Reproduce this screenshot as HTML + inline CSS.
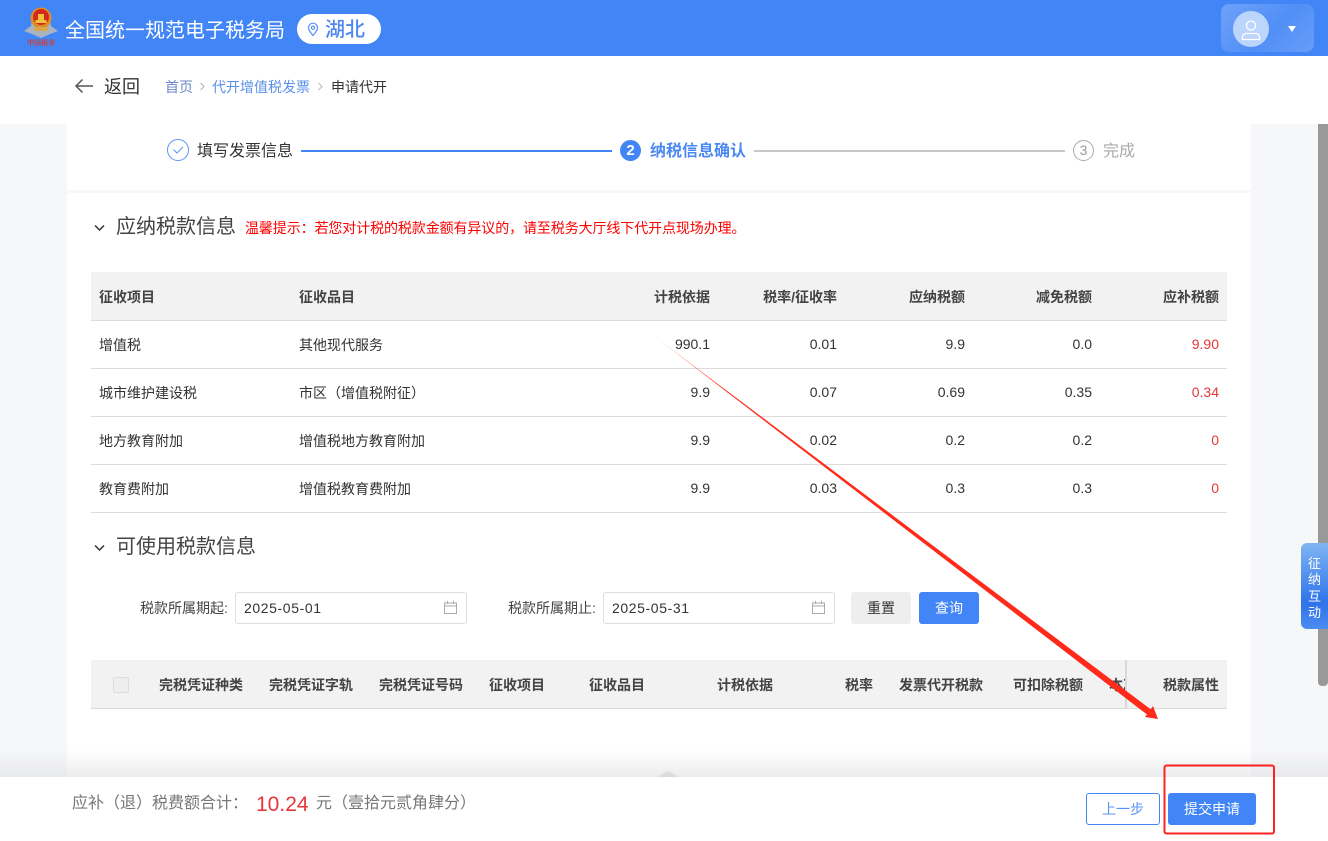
<!DOCTYPE html>
<html lang="zh">
<head>
<meta charset="utf-8">
<title>申请代开</title>
<style>
html,body{margin:0;padding:0;width:1328px;height:841px;overflow:hidden;background:#fff}
body{position:relative;font-family:"Liberation Sans","Noto Sans CJK SC",sans-serif;color:#333;font-size:14px}
.a{position:absolute}
.t{position:absolute;white-space:nowrap;line-height:20px;height:20px}
.r{text-align:right}
.h{font-weight:700;color:#444;font-size:14px}
.c{font-size:14px;color:#333}
.n{font-size:14px;color:#333}
.red{color:#e8353a}
.line{position:absolute;left:91px;width:1136px;height:1px;background:#dcdcdc}
.input{position:absolute;top:592px;width:230px;height:30px;border:1px solid #dedede;border-radius:3px;background:#fff}
.input span{position:absolute;left:8px;top:5px;font-size:14px;line-height:20px;color:#333;letter-spacing:.6px}
.input svg{position:absolute;right:9px;top:8px}
</style>
</head>
<body>
<!-- backgrounds -->
<div class="a" style="left:0;top:124px;width:1328px;height:653px;background:#f6f7f9"></div>
<div class="a" style="left:67px;top:124px;width:1184px;height:653px;background:#fff"></div>
<div class="a" style="left:67px;top:190px;width:1184px;height:3px;background:#f8f8f8"></div>
<div class="a" style="left:1318px;top:124px;width:10px;height:562px;background:#999;border-radius:0 0 4px 4px"></div>

<!-- header -->
<div class="a" style="left:0;top:0;width:1328px;height:56px;background:#4285f6"></div>
<svg class="a" style="left:23px;top:6px" width="36" height="34" viewBox="0 0 36 34">
  <path d="M1 25 L8 20 L9 11 L27 11 L28 20 L35 25 L27 28 L18 32 L9 28Z" fill="#a8b4bf"/>
  <circle cx="18" cy="12" r="10.500" fill="#dc8e22"/>
  <circle cx="18" cy="11" r="8" fill="#d5281d"/>
  <rect x="12.500" y="14" width="11" height="3" fill="#f1c33a"/>
  <rect x="15" y="8" width="6" height="6" fill="#f1c33a"/>
  <rect x="11" y="21" width="14" height="4" rx="2" fill="#dca64a"/>
</svg>
<div class="t" style="left:27px;top:39px;height:9px;line-height:9px;font-size:7px;letter-spacing:0;color:#e0341f;font-family:'Liberation Serif','Noto Serif CJK SC',serif;font-weight:700">中国税务</div>
<div class="t" style="left:65px;top:17px;height:28px;line-height:28px;font-size:20px;color:#fff">全国统一规范电子税务局</div>
<div class="a" style="left:297px;top:14px;width:84px;height:30px;background:#fff;border-radius:15px"></div>
<svg class="a" style="left:307px;top:22px" width="12" height="15" viewBox="0 0 12 15" fill="none" stroke="#5a93f3" stroke-width="1.200"><path d="M6 13.500C3.500 10.500 1.500 8.200 1.500 5.700a4.500 4.500 0 0 1 9 0C10.500 8.200 8.500 10.500 6 13.500Z"/><circle cx="6" cy="5.700" r="1.600"/></svg>
<div class="t" style="left:325px;top:17px;height:26px;line-height:26px;font-size:20px;font-weight:500;color:#4c88f0">湖北</div>
<div class="a" style="left:1221px;top:4px;width:93px;height:48px;border-radius:8px;background:linear-gradient(135deg,rgba(255,255,255,.24),rgba(255,255,255,.08) 55%,rgba(255,255,255,.2))"></div>
<div class="a" style="left:1233px;top:11px;width:36px;height:36px;border-radius:50%;background:#bcd5fb"></div>
<svg class="a" style="left:1240px;top:19px" width="22" height="22" viewBox="0 0 22 22" fill="none" stroke="#fff" stroke-width="1.300"><circle cx="11" cy="6.500" r="4.500"/><path d="M2.500 20.500v-2.500a3.500 3.500 0 0 1 3.500-3.500h10a3.500 3.500 0 0 1 3.500 3.500v2.500z"/></svg>
<div class="a" style="left:1288px;top:26px;width:0;height:0;border-left:4px solid transparent;border-right:4px solid transparent;border-top:6px solid #fff"></div>

<!-- nav -->
<svg class="a" style="left:74px;top:78px" width="20" height="16" viewBox="0 0 20 16" fill="none" stroke="#555" stroke-width="1.500"><path d="M19 8H2M8.500 1.500 2 8l6.500 6.500"/></svg>
<div class="t" style="left:104px;top:77px;font-size:18px;color:#333">返回</div>
<div class="t" style="left:165px;top:77px;color:#6b86c9">首页</div>
<svg class="a" style="left:199px;top:82px" width="7" height="9" viewBox="0 0 7 9" fill="none" stroke="#bbb" stroke-width="1.200"><path d="M1.500 1l3.500 3.500L1.500 8"/></svg>
<div class="t" style="left:212px;top:77px;color:#5b8fe9">代开增值税发票</div>
<svg class="a" style="left:317px;top:82px" width="7" height="9" viewBox="0 0 7 9" fill="none" stroke="#bbb" stroke-width="1.200"><path d="M1.500 1l3.500 3.500L1.500 8"/></svg>
<div class="t" style="left:331px;top:77px;color:#333">申请代开</div>

<!-- steps -->
<svg class="a" style="left:166px;top:138px" width="24" height="24" viewBox="0 0 24 24" fill="none" stroke="#5a93f3" stroke-width="1"><circle cx="12" cy="12" r="10.500"/><path d="M7.500 11.500l3.500 3.500 6-6"/></svg>
<div class="t" style="left:197px;top:142px;font-size:16px;color:#333">填写发票信息</div>
<div class="a" style="left:301px;top:150px;width:311px;height:2px;background:#4285f6"></div>
<div class="a" style="left:620px;top:140px;width:21px;height:21px;border-radius:50%;background:#4285f6;color:#fff;font-weight:700;font-size:15px;line-height:21px;text-align:center">2</div>
<div class="t" style="left:650px;top:142px;font-size:16px;font-weight:700;color:#4a88f2">纳税信息确认</div>
<div class="a" style="left:754px;top:150px;width:311px;height:2px;background:#c8c8c8"></div>
<div class="a" style="left:1073px;top:140px;width:19px;height:19px;border:1px solid #aaa;border-radius:50%;color:#999;font-size:14px;line-height:19px;text-align:center">3</div>
<div class="t" style="left:1103px;top:142px;font-size:16px;color:#aaa">完成</div>

<!-- section 1 -->
<svg class="a" style="left:94px;top:224px" width="11" height="8" viewBox="0 0 11 8" fill="none" stroke="#333" stroke-width="1.500"><path d="M1 1.500l4.500 4.500 4.500-4.500"/></svg>
<div class="t" style="left:116px;top:217px;font-size:20px;color:#444">应纳税款信息</div>
<div class="t" style="left:245px;top:218px;font-size:14px;letter-spacing:-.1px;color:#f00">温馨提示：若您对计税的税款金额有异议的，请至税务大厅线下代开点现场办理。</div>

<div class="a" style="left:91px;top:272px;width:1136px;height:48px;background:#f2f2f2"></div>
<div class="line" style="top:320px"></div>
<div class="line" style="top:368px"></div>
<div class="line" style="top:416px"></div>
<div class="line" style="top:464px"></div>
<div class="line" style="top:512px"></div>

<div class="t h" style="left:99px;top:287px">征收项目</div>
<div class="t h" style="left:299px;top:287px">征收品目</div>
<div class="t h r" style="right:618px;top:287px">计税依据</div>
<div class="t h r" style="right:491px;top:287px">税率/征收率</div>
<div class="t h r" style="right:363px;top:287px">应纳税额</div>
<div class="t h r" style="right:236px;top:287px">减免税额</div>
<div class="t h r" style="right:109px;top:287px">应补税额</div>

<div class="t c" style="left:99px;top:335px">增值税</div>
<div class="t c" style="left:299px;top:335px">其他现代服务</div>
<div class="t n r" style="right:618px;top:334px">990.1</div>
<div class="t n r" style="right:491px;top:334px">0.01</div>
<div class="t n r" style="right:363px;top:334px">9.9</div>
<div class="t n r" style="right:236px;top:334px">0.0</div>
<div class="t n r red" style="right:109px;top:334px">9.90</div>

<div class="t c" style="left:99px;top:383px">城市维护建设税</div>
<div class="t c" style="left:299px;top:383px">市区（增值税附征）</div>
<div class="t n r" style="right:618px;top:382px">9.9</div>
<div class="t n r" style="right:491px;top:382px">0.07</div>
<div class="t n r" style="right:363px;top:382px">0.69</div>
<div class="t n r" style="right:236px;top:382px">0.35</div>
<div class="t n r red" style="right:109px;top:382px">0.34</div>

<div class="t c" style="left:99px;top:431px">地方教育附加</div>
<div class="t c" style="left:299px;top:431px">增值税地方教育附加</div>
<div class="t n r" style="right:618px;top:430px">9.9</div>
<div class="t n r" style="right:491px;top:430px">0.02</div>
<div class="t n r" style="right:363px;top:430px">0.2</div>
<div class="t n r" style="right:236px;top:430px">0.2</div>
<div class="t n r red" style="right:109px;top:430px">0</div>

<div class="t c" style="left:99px;top:479px">教育费附加</div>
<div class="t c" style="left:299px;top:479px">增值税教育费附加</div>
<div class="t n r" style="right:618px;top:478px">9.9</div>
<div class="t n r" style="right:491px;top:478px">0.03</div>
<div class="t n r" style="right:363px;top:478px">0.3</div>
<div class="t n r" style="right:236px;top:478px">0.3</div>
<div class="t n r red" style="right:109px;top:478px">0</div>

<!-- section 2 -->
<svg class="a" style="left:94px;top:544px" width="11" height="8" viewBox="0 0 11 8" fill="none" stroke="#333" stroke-width="1.500"><path d="M1 1.500l4.500 4.500 4.500-4.500"/></svg>
<div class="t" style="left:116px;top:537px;font-size:20px;color:#444">可使用税款信息</div>

<div class="t c" style="left:140px;top:598px;color:#444">税款所属期起:</div>
<div class="input" style="left:235px"><span>2025-05-01</span><svg width="13" height="13" viewBox="0 0 13 13" fill="none" stroke="#aaa"><rect x=".5" y="2" width="12" height="10.500"/><path d="M.5 5h12M3.500 0v3M9.500 0v3"/></svg></div>
<div class="t c" style="left:508px;top:598px;color:#444">税款所属期止:</div>
<div class="input" style="left:603px"><span>2025-05-31</span><svg width="13" height="13" viewBox="0 0 13 13" fill="none" stroke="#aaa"><rect x=".5" y="2" width="12" height="10.500"/><path d="M.5 5h12M3.500 0v3M9.500 0v3"/></svg></div>
<div class="a" style="left:851px;top:592px;width:60px;height:32px;background:#eee;border-radius:3px;text-align:center;line-height:32px;font-size:14px;color:#333">重置</div>
<div class="a" style="left:919px;top:592px;width:60px;height:32px;background:#4285f6;border-radius:3px;text-align:center;line-height:32px;font-size:14px;color:#fff">查询</div>

<div class="a" style="left:91px;top:660px;width:1136px;height:48px;background:#f2f2f2"></div>
<div class="line" style="top:708px"></div>
<div class="a" style="left:113px;top:677px;width:14px;height:14px;border:1px solid #ddd;border-radius:2px;background:#eee"></div>
<div class="t h" style="left:159px;top:675px">完税凭证种类</div>
<div class="t h" style="left:269px;top:675px">完税凭证字轨</div>
<div class="t h" style="left:379px;top:675px">完税凭证号码</div>
<div class="t h" style="left:489px;top:675px">征收项目</div>
<div class="t h" style="left:589px;top:675px">征收品目</div>
<div class="t h" style="left:717px;top:675px">计税依据</div>
<div class="t h" style="left:845px;top:675px">税率</div>
<div class="t h" style="left:899px;top:675px">发票代开税款</div>
<div class="t h" style="left:1013px;top:675px">可扣除税额</div>
<div class="a" style="left:1109px;top:675px;width:16px;height:20px;overflow:hidden"><div class="t h" style="left:0;top:0">本次</div></div>
<div class="a" style="left:1125px;top:660px;width:2px;height:48px;background:#d8d8d8"></div>
<div class="t h" style="left:1163px;top:675px">税款属性</div>

<!-- floating side tab -->
<div class="a" style="left:1301px;top:543px;width:27px;height:86px;border-radius:6px 0 0 6px;background:linear-gradient(180deg,#7fb5f3,#2f73ea 70%,#4c8cf0);color:#fff;font-size:13px;line-height:16.300px;text-align:center;padding-top:13px;box-sizing:border-box">征<br>纳<br>互<br>动</div>

<!-- bottom bar shadow -->
<div class="a" style="left:0;top:750px;width:1328px;height:27px;background:linear-gradient(180deg,rgba(225,226,228,0),rgba(225,226,228,.65))"></div>
<div class="a" style="left:657px;top:771px;width:0;height:0;border-left:11px solid transparent;border-right:11px solid transparent;border-bottom:6px solid #dcdcdc"></div>
<div class="a" style="left:0;top:777px;width:1328px;height:64px;background:#fff"></div>
<div class="t" style="left:72px;top:794px;font-size:16px;color:#777">应补（退）税费额合计：</div>
<div class="t" style="left:256px;top:795px;font-size:21px;color:#e8353a">10.24</div>
<div class="t" style="left:316px;top:794px;font-size:16px;color:#777">元（壹拾元贰角肆分）</div>
<div class="a" style="left:1086px;top:793px;width:72px;height:30px;border:1px solid #4285f6;border-radius:3px;text-align:center;line-height:31px;font-size:14px;color:#5a93f3">上一步</div>
<div class="a" style="left:1168px;top:793px;width:88px;height:32px;background:#4285f6;border-radius:3px;text-align:center;line-height:33px;font-size:14px;color:#fff">提交申请</div>

<!-- annotations -->
<svg class="a" style="left:0;top:0" width="1328" height="841" viewBox="0 0 1328 841">
  <defs><linearGradient id="g" gradientUnits="userSpaceOnUse" x1="650" y1="333" x2="730" y2="394"><stop offset="0" stop-color="#ff2a1a" stop-opacity=".2"/><stop offset="1" stop-color="#ff2a1a"/></linearGradient></defs>
  <polygon points="650,333 1151,709.500 1147,714.500" fill="url(#g)"/>
  <polygon points="1153,706 1158,719 1145,717" fill="#ff2a1a"/>
  <rect x="1164.500" y="765.500" width="109.500" height="68" rx="2" fill="none" stroke="#f22" stroke-width="2"/>
</svg>
</body>
</html>
